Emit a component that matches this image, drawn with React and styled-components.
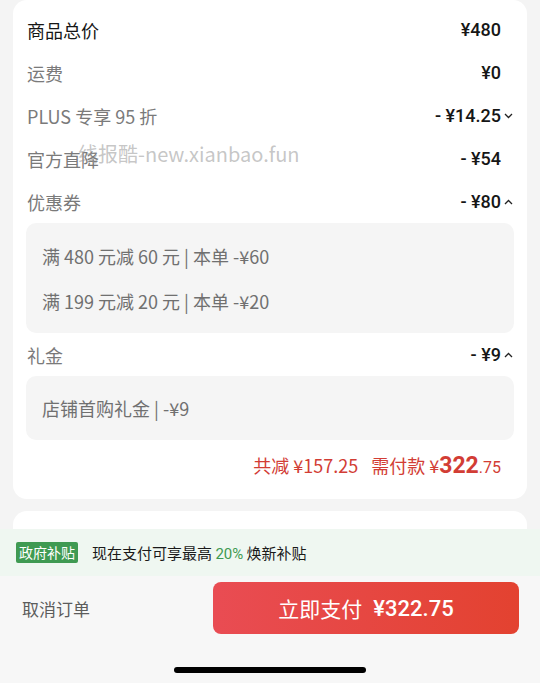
import React from "react"
import styled, { createGlobalStyle } from "styled-components"

const GlobalStyle = createGlobalStyle`
  html, body {
    margin: 0;
    padding: 0;
    background: #f4f4f4;
    font-family: "Noto Sans CJK SC", "Noto Sans", sans-serif;
  }
`

const Page = styled.div`
  width: 540px;
  height: 683px;
  display: flex;
  flex-direction: column;
  overflow: hidden;
  background: #f4f4f4;
`

const Card = styled.section`
  position: relative;
  margin: 0 13px;
  background: #fff;
  border-radius: 14px;
  padding: 8px 13px 9px 13px;
`

const Row = styled.div`
  display: flex;
  align-items: center;
  justify-content: space-between;
  height: 43px;
`

const Label = styled.div`
  font-size: 18px;
  color: ${p => (p.$dark ? "#161616" : "#7a7a7a")};
  padding-left: 1px;
`

const Value = styled.div`
  display: flex;
  align-items: center;
  font-family: "Roboto", "Noto Sans", sans-serif;
  font-weight: 500;
  font-size: 18px;
  color: #161616;
  padding-right: ${p => (p.$arrow ? "0" : "13px")};
`

const Arrow = styled.svg`
  width: 9px;
  height: 6px;
  margin-left: 3px;
  margin-right: 1px;
`

const SubBox = styled.div`
  background: #f5f5f5;
  border-radius: 10px;
  padding: 10px 16px;
`

const SubLine = styled.div`
  height: ${p => p.$h || 45}px;
  display: flex;
  align-items: center;
  font-size: 18px;
  color: #707070;
`

const Total = styled.div`
  height: 50px;
  display: flex;
  align-items: center;
  justify-content: flex-end;
  gap: 13px;
  padding-right: 13px;
  color: #d23d35;
  font-size: 18px;
`

const Big = styled.span`
  font-family: "Roboto", sans-serif;
  font-weight: 700;
  font-size: 23px;
`

const Small = styled.span`
  font-family: "Roboto", sans-serif;
  font-size: 16px;
`

const Watermark = styled.div`
  position: absolute;
  left: 65px;
  top: 139px;
  font-size: 20px;
  color: rgba(150, 150, 150, 0.55);
  pointer-events: none;
`

const NextCard = styled.div`
  margin: 12px 13px 0;
  height: 18px;
  background: #fff;
  border-radius: 14px 14px 0 0;
`

const Subsidy = styled.div`
  height: 47px;
  display: flex;
  align-items: center;
  gap: 14px;
  padding-left: 16px;
  background: #eff7f1;
  font-size: 15px;
  color: #1a1a1a;
`

const Tag = styled.span`
  background: #3f9a52;
  color: #fff;
  font-size: 14px;
  padding: 0 3px;
  height: 21px;
  line-height: 21px;
  border-radius: 2px;
`

const Green = styled.span`
  color: #3f9a52;
  font-family: "Roboto", sans-serif;
`

const Footer = styled.div`
  flex: 1;
  background: #f7f7f7;
  display: flex;
  flex-direction: column;
  align-items: center;
`

const Actions = styled.div`
  align-self: stretch;
  display: flex;
  align-items: center;
  justify-content: space-between;
  padding: 6px 21px 0 22px;
`

const Cancel = styled.div`
  font-size: 17px;
  color: #5c5c5c;
`

const PayButton = styled.div`
  width: 306px;
  height: 52px;
  border-radius: 8px;
  background: linear-gradient(90deg, #e94c53, #e34230);
  color: #fff;
  display: flex;
  align-items: center;
  justify-content: center;
  gap: 11px;
  font-size: 21px;
`

const PayNum = styled.span`
  font-family: "Roboto", sans-serif;
  font-weight: 500;
  font-size: 22px;
`

const HomeBar = styled.div`
  margin-top: 33px;
  width: 192px;
  height: 6px;
  border-radius: 3px;
  background: #000;
`

function Chevron({ up }) {
  return (
    <Arrow viewBox="0 0 9 6">
      <path
        d={up ? "M1 5 L4.5 1.5 L8 5" : "M1 1 L4.5 4.5 L8 1"}
        fill="none"
        stroke="#222"
        strokeWidth="1.3"
      />
    </Arrow>
  )
}

export default function App() {
  return (
    <Page>
      <GlobalStyle />
      <Card>
        <Row>
          <Label $dark>商品总价</Label>
          <Value>¥480</Value>
        </Row>
        <Row>
          <Label>运费</Label>
          <Value>¥0</Value>
        </Row>
        <Row>
          <Label>PLUS 专享 95 折</Label>
          <Value $arrow>
            - ¥14.25
            <Chevron />
          </Value>
        </Row>
        <Row>
          <Label>官方直降</Label>
          <Value>- ¥54</Value>
        </Row>
        <Row>
          <Label>优惠券</Label>
          <Value $arrow>
            - ¥80
            <Chevron up />
          </Value>
        </Row>
        <SubBox>
          <SubLine>满 480 元减 60 元 | 本单 -¥60</SubLine>
          <SubLine>满 199 元减 20 元 | 本单 -¥20</SubLine>
        </SubBox>
        <Row>
          <Label>礼金</Label>
          <Value $arrow>
            - ¥9
            <Chevron up />
          </Value>
        </Row>
        <SubBox>
          <SubLine $h={44}>店铺首购礼金 | -¥9</SubLine>
        </SubBox>
        <Total>
          <span>共减 ¥157.25</span>
          <span>
            需付款 ¥<Big>322</Big>
            <Small>.75</Small>
          </span>
        </Total>
        <Watermark>线报酷-new.xianbao.fun</Watermark>
      </Card>
      <NextCard />
      <Subsidy>
        <Tag>政府补贴</Tag>
        <span>
          现在支付可享最高 <Green>20%</Green> 焕新补贴
        </span>
      </Subsidy>
      <Footer>
        <Actions>
          <Cancel>取消订单</Cancel>
          <PayButton>
            <span>立即支付</span>
            <PayNum>¥322.75</PayNum>
          </PayButton>
        </Actions>
        <HomeBar />
      </Footer>
    </Page>
  )
}
